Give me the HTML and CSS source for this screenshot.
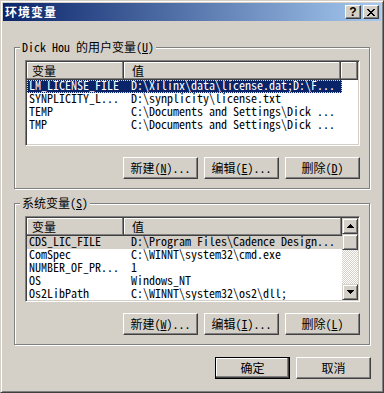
FILE: index.html
```html
<!DOCTYPE html>
<html>
<head>
<meta charset="utf-8">
<link rel="stylesheet" href="styles.css">
</head>
<body>
<div class="window">
  <div class="titlebar">
    <span class="title">环境变量</span>
    <div class="caption-buttons">
      <span class="cap-btn help">?</span>
      <span class="cap-btn close"><svg width="8" height="7" viewBox="0 0 8 7" shape-rendering="crispEdges"><path d="M0 0h2v1H0zM6 0h2v1H6zM1 1h2v1H1zM5 1h2v1H5zM2 2h4v1H2zM3 3h2v1H3zM2 4h4v1H2zM1 5h2v1H1zM5 5h2v1H5zM0 6h2v1H0zM6 6h2v1H6z" fill="#000"/></svg></span>
    </div>
  </div>
  <div class="client">
    <fieldset class="group first">
      <legend>Dick Hou 的用户变量(<u>U</u>)</legend>
      <div class="listview">
        <div class="lv-main">
          <div class="lv-header">
            <div class="hd c1">变量</div>
            <div class="hd c2">值</div>
            <div class="hd fill"></div>
          </div>
          <div class="row sel focus"><span class="c1">LM_LICENSE_FILE</span><span class="c2">D:\Xilinx\data\license.dat;D:\F...</span></div>
          <div class="row"><span class="c1">SYNPLICITY_L...</span><span class="c2">D:\synplicity\license.txt</span></div>
          <div class="row"><span class="c1">TEMP</span><span class="c2">C:\Documents and Settings\Dick ...</span></div>
          <div class="row"><span class="c1">TMP</span><span class="c2">C:\Documents and Settings\Dick ...</span></div>
        </div>
      </div>
      <div class="btn-row">
        <button class="btn">新建(<u>N</u>)...</button>
        <button class="btn">编辑(<u>E</u>)...</button>
        <button class="btn">删除(<u>D</u>)</button>
      </div>
    </fieldset>
    <fieldset class="group second">
      <legend>系统变量(<u>S</u>)</legend>
      <div class="listview">
        <div class="lv-main">
          <div class="lv-header">
            <div class="hd c1">变量</div>
            <div class="hd c2 grow">值</div>
          </div>
          <div class="row sel-inactive"><span class="c1">CDS_LIC_FILE</span><span class="c2">D:\Program Files\Cadence Design...</span></div>
          <div class="row"><span class="c1">ComSpec</span><span class="c2">C:\WINNT\system32\cmd.exe</span></div>
          <div class="row"><span class="c1">NUMBER_OF_PR...</span><span class="c2">1</span></div>
          <div class="row"><span class="c1">OS</span><span class="c2">Windows_NT</span></div>
          <div class="row"><span class="c1">Os2LibPath</span><span class="c2">C:\WINNT\system32\os2\dll;</span></div>
        </div>
        <div class="scrollbar">
          <div class="sb-btn"><svg width="7" height="4" viewBox="0 0 7 4" shape-rendering="crispEdges"><path d="M3 0h1v1H3zM2 1h3v1H2zM1 2h5v1H1zM0 3h7v1H0z" fill="#000"/></svg></div>
          <div class="sb-btn thumb"></div>
          <div class="sb-track"></div>
          <div class="sb-btn"><svg width="7" height="4" viewBox="0 0 7 4" shape-rendering="crispEdges"><path d="M0 0h7v1H0zM1 1h5v1H1zM2 2h3v1H2zM3 3h1v1H3z" fill="#000"/></svg></div>
        </div>
      </div>
      <div class="btn-row">
        <button class="btn">新建(<u>W</u>)...</button>
        <button class="btn">编辑(<u>I</u>)...</button>
        <button class="btn">删除(<u>L</u>)</button>
      </div>
    </fieldset>
    <div class="dlg-buttons">
      <button class="btn default">确定</button>
      <button class="btn">取消</button>
    </div>
  </div>
</div>
</body>
</html>
```
FILE: styles.css
```css
* { box-sizing: border-box; }
html, body { margin: 0; padding: 0; }
body {
  width: 384px;
  height: 393px;
  overflow: hidden;
  background: #D4D0C8;
  font-family: "Noto Sans Mono CJK SC", "Noto Sans CJK SC", "Liberation Mono", monospace;
  font-size: 12px;
  color: #000;
}
.window {
  width: 384px;
  height: 393px;
  border: 1px solid;
  border-color: #D4D0C8 #404040 #404040 #D4D0C8;
  box-shadow: inset 1px 1px #fff, inset -1px -1px #808080;
  padding: 2px;
  display: flex;
  flex-direction: column;
  background: #D4D0C8;
}
.titlebar {
  height: 18px;
  flex: none;
  display: flex;
  align-items: center;
  background: linear-gradient(to right, #0A246A, #A6CAF0);
  padding: 0 2px;
}
.title {
  flex: 1;
  color: #fff;
  font-weight: bold;
  font-family: "Noto Sans CJK SC", sans-serif;
  font-size: 12px;
  letter-spacing: 1px;
  line-height: 18px;
}
.caption-buttons { display: flex; gap: 2px; }
.cap-btn {
  width: 16px;
  height: 14px;
  background: #D4D0C8;
  border: 1px solid;
  border-color: #fff #404040 #404040 #fff;
  box-shadow: inset -1px -1px #808080;
  display: flex;
  align-items: center;
  justify-content: center;
}
.help {
  font-family: "Liberation Sans", sans-serif;
  font-weight: bold;
  font-size: 12px;
  line-height: 12px;
}
.client {
  flex: 1;
  display: flex;
  flex-direction: column;
  padding: 0 11px;
}
.group {
  margin: 19px 0 0;
  padding: 6px 9px 9px 10px;
  border: 1px solid #808080;
  box-shadow: inset 1px 1px #fff, 1px 1px #fff;
  min-width: 0;
}
.group.second { margin-top: 7px; }
.group legend {
  margin-left: -5px;
  padding: 0 2px;
  line-height: 14px;
  background: #D4D0C8;
}
.listview {
  height: 86px;
  border: 1px solid;
  border-color: #808080 #fff #fff #808080;
  box-shadow: inset 1px 1px #404040, inset -1px -1px #D4D0C8;
  background: #fff;
  padding: 1px;
  display: flex;
}
.lv-main { flex: 1; min-width: 0; overflow: hidden; }
.lv-header { display: flex; height: 18px; }
.hd {
  background: #D4D0C8;
  box-shadow: inset -1px -1px #404040, inset -2px -2px #808080, inset 1px 1px #fff;
  line-height: 18px;
  white-space: nowrap;
}
.hd.c1 { width: 97px; padding-left: 5px; }
.hd.c2 { width: 217px; padding-left: 8px; }
.hd.grow { flex: 1; }
.hd.fill { flex: 1; }
.row {
  display: flex;
  width: 315px;
  height: 13px;
  line-height: 9px;
  white-space: nowrap;
}
.row .c1 { width: 97px; padding-left: 2px; flex: none; }
.row .c2 { flex: 1; padding-left: 7px; }
.row.sel { background: #0A246A; color: #fff; }
.row.focus { outline: 1px dotted #F5DB95; outline-offset: -1px; }
.row.sel-inactive { background: #D4D0C8; }
.scrollbar {
  width: 16px;
  flex: none;
  display: flex;
  flex-direction: column;
  background-color: #fff;
  background-image: conic-gradient(#D4D0C8 25%, #fff 0 50%, #D4D0C8 0 75%, #fff 0);
  background-size: 2px 2px;
}
.sb-btn {
  width: 16px;
  height: 16px;
  flex: none;
  background: #D4D0C8;
  border: 1px solid;
  border-color: #D4D0C8 #404040 #404040 #D4D0C8;
  box-shadow: inset 1px 1px #fff, inset -1px -1px #808080;
  display: flex;
  align-items: center;
  justify-content: center;
}
.sb-track { flex: 1; }
.btn-row {
  display: flex;
  justify-content: flex-end;
  gap: 6px;
  margin-top: 11px;
}
.btn {
  width: 75px;
  height: 22px;
  padding: 0;
  margin: 0;
  font: inherit;
  font-size: 12px;
  line-height: 18px;
  color: #000;
  background: #D4D0C8;
  border: 1px solid;
  border-color: #fff #404040 #404040 #fff;
  box-shadow: inset -1px -1px #808080;
  white-space: nowrap;
}
.btn.default {
  border-color: #000;
  box-shadow: inset -1px -1px #404040, inset -2px -2px #808080, inset 1px 1px #fff;
}
.dlg-buttons {
  display: flex;
  justify-content: flex-end;
  gap: 6px;
  margin-top: 12px;
  margin-right: -1px;
}
```
